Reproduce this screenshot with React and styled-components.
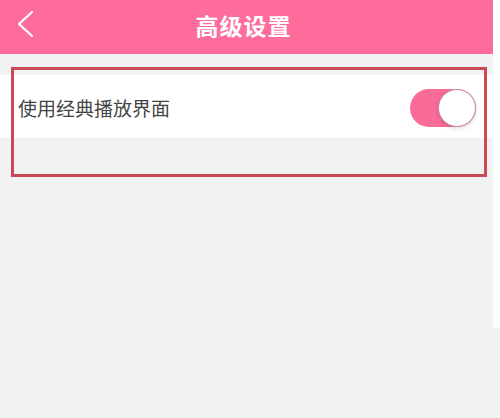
import styled, { createGlobalStyle } from "styled-components";

const GlobalStyle = createGlobalStyle`
  html, body {
    margin: 0;
    padding: 0;
    background: #f2f2f2;
  }
  body {
    font-family: "Noto Sans CJK SC", "Noto Sans", sans-serif;
  }
`;

const Page = styled.div`
  display: flex;
  align-items: flex-start;
  width: 500px;
  height: 418px;
  overflow: hidden;
`;

const Screen = styled.div`
  position: relative;
  width: 493px;
  height: 418px;
  background: #f2f2f2;
`;

const EdgeStrip = styled.div`
  width: 7px;
  height: 328px;
  background: #ffffff;
`;

const Header = styled.div`
  position: relative;
  height: 54px;
  background: #fd6c9b;
  display: flex;
  align-items: center;
  justify-content: center;
`;

const BackButton = styled.div`
  position: absolute;
  left: 14px;
  top: 9px;
  width: 24px;
  height: 30px;
  display: flex;
`;

const Title = styled.h1`
  margin: 0 6px 4px 0;
  color: #ffffff;
  font-size: 23px;
  font-weight: 700;
  letter-spacing: 1px;
`;

const Content = styled.div`
  padding-top: 21px;
`;

const Row = styled.div`
  height: 63px;
  background: #ffffff;
  display: flex;
  align-items: center;
  justify-content: space-between;
  padding: 0 17px 0 18px;
`;

const Label = styled.span`
  font-size: 19px;
  color: #444444;
  margin-top: 1px;
`;

const Switch = styled.div`
  width: 66px;
  height: 38px;
  border-radius: 19px;
  background: ${(p) => (p.$on ? "#f86c97" : "#dddddd")};
  display: flex;
  justify-content: ${(p) => (p.$on ? "flex-end" : "flex-start")};
  align-items: center;
  margin-top: 2px;
`;

const Knob = styled.div`
  width: 38px;
  height: 38px;
  box-sizing: border-box;
  border-radius: 50%;
  background: #ffffff;
  border: 1.5px solid #c98aa0;
  box-shadow: 0 2px 4px rgba(0, 0, 0, 0.12);
`;

const Highlight = styled.div`
  position: absolute;
  left: 11px;
  top: 67px;
  width: 476px;
  height: 110px;
  box-sizing: border-box;
  border: 3px solid #c94a55;
  pointer-events: none;
`;

export default function App() {
  return (
    <>
      <GlobalStyle />
      <Page>
        <Screen>
          <Header>
            <BackButton>
              <svg width="24" height="30" viewBox="0 0 24 30">
                <path
                  d="M18 3 L5 15 L18 27"
                  fill="none"
                  stroke="#ffffff"
                  strokeWidth="2.2"
                  strokeLinecap="round"
                  strokeLinejoin="round"
                />
              </svg>
            </BackButton>
            <Title>高级设置</Title>
          </Header>
          <Content>
            <Row>
              <Label>使用经典播放界面</Label>
              <Switch $on>
                <Knob />
              </Switch>
            </Row>
          </Content>
          <Highlight />
        </Screen>
        <EdgeStrip />
      </Page>
    </>
  );
}
